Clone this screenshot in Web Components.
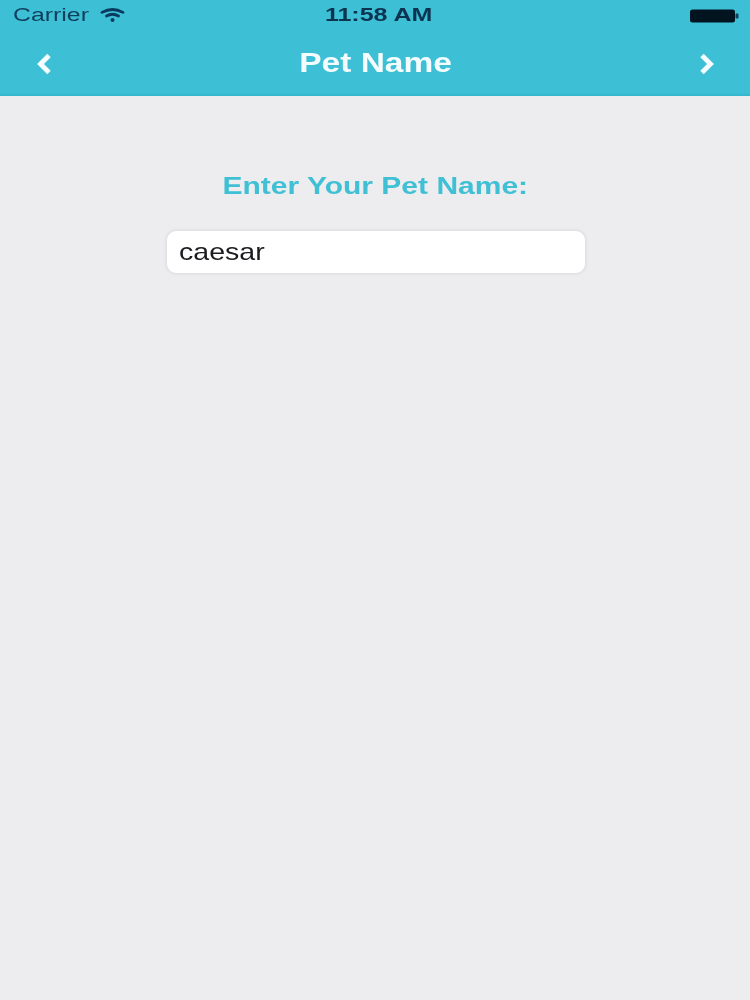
<!DOCTYPE html>
<html>
<head>
<meta charset="utf-8">
<style>
html,body{margin:0;padding:0;background:#edecee;}
body{font-family:"Liberation Sans",Arial,sans-serif;}
</style>
</head>
<body>
<pet-app>
  <pet-header title="Pet Name"></pet-header>
  <pet-form label="Enter Your Pet Name:" value="caesar"></pet-form>
</pet-app>
<script>
class WideText extends HTMLElement{
  constructor(){super();this.attachShadow({mode:'open'}).innerHTML=`<style>
  :host{display:inline-block;white-space:nowrap;transform:scaleX(var(--sx,1.3));transform-origin:var(--ox,center);filter:blur(.45px)}
  </style><slot></slot>`;}
}
class PetApp extends HTMLElement{
  constructor(){super();this.attachShadow({mode:'open'}).innerHTML=`<style>
  :host{display:flex;flex-direction:column;width:750px;height:1000px;background:#edecee;overflow:hidden}
  </style><slot></slot>`;}
}
class PetStatus extends HTMLElement{
  constructor(){super();this.attachShadow({mode:'open'}).innerHTML=`<style>
  :host{display:grid;grid-template-columns:1fr auto 1fr;align-items:center;height:31px;padding:0 10px 0 13px;color:#0f3f5c;font-size:18px}
  .l{display:flex;align-items:center;gap:32px}
  .c{--sx:1.38;--ox:left}
  .t{font-weight:700;color:#0c3450;--sx:1.39;position:relative;left:2px}
  .r{display:flex;justify-content:flex-end}
  svg{display:block;filter:blur(.4px)}
  </style>
  <div class="l"><wide-text class="c">Carrier</wide-text>
   <svg width="25" height="15" viewBox="0 0 25 15" fill="none" stroke="#0b3a60" stroke-width="2.800" stroke-linecap="round"><path d="M2 4.400C8.500 .8 16.500 .8 23 4.400"/><path d="M6.500 8C10.300 5.800 14.700 5.800 18.500 8"/><circle cx="12.500" cy="12" r="2" fill="#0b3a60" stroke="none"/></svg></div>
  <wide-text class="t">11:58 AM</wide-text>
  <div class="r"><svg width="50" height="14" viewBox="0 0 50 14"><rect x="0" y="0.500" width="45" height="13" rx="2.500" fill="#02141f"/><rect x="45.500" y="4.500" width="3" height="5" rx="1.200" fill="#0f3f5c"/></svg></div>`;}
}
class PetHeader extends HTMLElement{
  constructor(){super();const t=this.getAttribute('title');this.attachShadow({mode:'open'}).innerHTML=`<style>
  :host{display:block;height:96px;background:#3dc0d6;box-shadow:inset 0 -2px 0 #37b8ce}
  .nav{display:flex;align-items:center;justify-content:space-between;height:65px;padding:0 35px 0 36px}
  h1{margin:0;font-size:27px;font-weight:700;color:#f4fcfd;--sx:1.24}
  svg{display:block;filter:blur(.4px)}
  </style>
  <pet-status></pet-status>
  <div class="nav">
   <svg width="16" height="22" viewBox="0 0 16 22" fill="none" stroke="#f6fdfe" stroke-width="4.800"><path d="M13 2.500L4.500 11l8.500 8.500"/></svg>
   <h1><wide-text>${t}</wide-text></h1>
   <svg width="16" height="22" viewBox="0 0 16 22" fill="none" stroke="#f6fdfe" stroke-width="4.800"><path d="M3 2.500L11.500 11 3 19.500"/></svg>
  </div>`;}
}
class PetForm extends HTMLElement{
  constructor(){super();this.attachShadow({mode:'open'}).innerHTML=`<style>
  :host{display:flex;flex-direction:column;align-items:center;padding-top:76px}
  .lab{font-size:24px;font-weight:700;color:#3fc0d5;--sx:1.25;line-height:28px}
  .f{box-sizing:border-box;width:418px;height:42px;margin:31px 0 0 2px;background:#fff;border-radius:9px;box-shadow:0 0 4px rgba(0,0,0,.12);display:flex;align-items:center;padding:0 12px;font-size:24px;color:#1c1c20}
  .v{--sx:1.19;--ox:left}
  </style><wide-text class="lab">${this.getAttribute('label')}</wide-text><div class="f"><wide-text class="v">${this.getAttribute('value')}</wide-text></div>`;}
}
customElements.define('wide-text',WideText);
customElements.define('pet-status',PetStatus);
customElements.define('pet-header',PetHeader);
customElements.define('pet-form',PetForm);
customElements.define('pet-app',PetApp);
</script>
</body>
</html>
